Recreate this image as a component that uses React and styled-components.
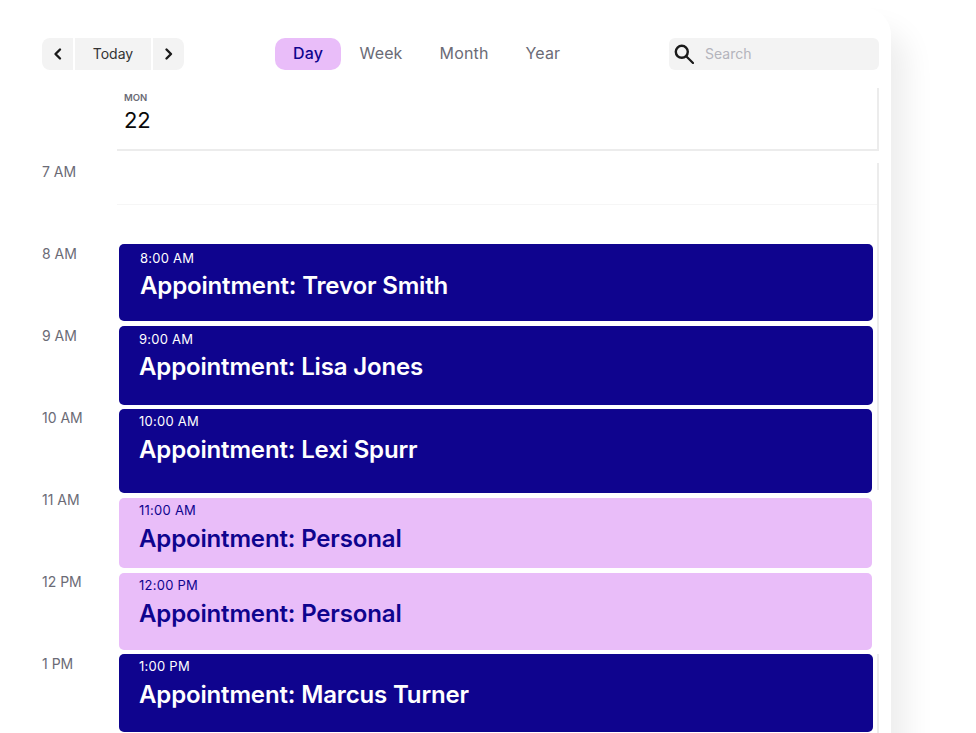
import React from "react";
import styled, { createGlobalStyle } from "styled-components";

const Global = createGlobalStyle`
  html, body { margin: 0; padding: 0; height: 733px; overflow: hidden; background: #fff; }
  body { font-family: Inter, "Liberation Sans", sans-serif; -webkit-font-smoothing: antialiased; }
`;
const Card = styled.div`
  width: 921px; height: 770px; margin: 7px 0 0 -30px; box-sizing: border-box;
  padding: 31px 12px 0 72px; background: #fff; border-radius: 0 28px 0 0;
  box-shadow: 15px 24px 30px rgba(0,0,0,.075);
`;
const Toolbar = styled.div`display: flex; align-items: center; height: 32px;`;
const Nav = styled.div`display: flex; gap: 2px; width: 142px;`;
const NavButton = styled.button`
  border: 0; padding: 0 0 ${p => p.$wide ? 2 : 0}px; width: ${p => p.$wide ? 76 : 31}px; height: 32px; background: #f3f3f3;
  display: flex; align-items: center; justify-content: center; color: #333;
  font: 400 14px Inter, sans-serif;
  border-radius: ${p => p.$side === "l" ? "8px 0 0 8px" : p.$side === "r" ? "0 8px 8px 0" : "0"};
`;
const Tabs = styled.div`display: flex; margin-left: 91px; width: 394px;`;
const Tab = styled.div`
  height: 32px; box-sizing: border-box; display: flex; align-items: center;
  padding: 0 ${p => p.$active ? 18 : 18.5}px 2px; border-radius: 10px; min-width: ${p => p.$active ? 66 : 0}px;
  font-size: 16px; letter-spacing: .15px; font-weight: ${p => p.$active ? 500 : 400};
  color: ${p => p.$active ? "#0f048e" : "#6b6b76"};
  background: ${p => p.$active ? "#e9bdf9" : "transparent"};
`;
const Search = styled.div`
  width: 210px; height: 32px; background: #f3f3f3; border-radius: 6px; display: flex; align-items: center;
  padding: 0 0 0 5px; box-sizing: border-box; gap: 11px; color: #b4b4bc; font-size: 14px;
`;
const SearchLabel = styled.span`padding-bottom: 2px;`;
const Main = styled.div`display: flex; margin-top: 18px;`;
const Times = styled.div`width: 75px; padding-top: 75px; flex: none;`;
const TimeLabel = styled.div`height: 82px; font-size: 14px; line-height: 18px; color: #6b6b76;`;
const Day = styled.div`width: 762px; flex: none;`;
const DayHeader = styled.div`
  height: 63px; box-sizing: border-box; border-right: 2px solid #ececec; border-bottom: 2px solid #ececec;
  padding: 4px 0 0 7px;
`;
const Weekday = styled.div`font-size: 9.5px; font-weight: 600; line-height: 12px; color: #6b6b76;`;
const DayNum = styled.div`font-size: 22px; line-height: 28px; color: #0a0a0a; margin-top: 2px; letter-spacing: -.2px;`;
const Section = styled.div`
  box-sizing: border-box; height: ${p => p.$h}px; margin-top: ${p => p.$mt || 0}px;
  border-right: 2px solid ${p => p.$ruled ? "#ececec" : "transparent"};
  padding-top: ${p => p.$pt || 0}px;
`;
const Slot = styled.div`height: 42px; border-bottom: 1px solid #f6f6f6; box-sizing: border-box;`;
const Event = styled.div`
  box-sizing: border-box; height: ${p => p.$h}px; margin: ${p => p.$mt}px ${p => p.$mr}px 0 2px;
  border-radius: 5px; padding: ${p => p.$pt}px 0 0 ${p => p.$pl}px;
  background: ${p => p.$personal ? "#e9bdf9" : "#0f048e"};
  color: ${p => p.$personal ? "#0f048e" : "#fff"};
`;
const EventTime = styled.div`font-size: 13px; line-height: 16px; letter-spacing: .25px;`;
const EventTitle = styled.div`font-size: 24px; font-weight: 600; letter-spacing: -.15px; line-height: 30px; margin-top: ${p => p.$gap}px;`;

const Chevron = ({ d }) => (
  <svg width="16" height="16" viewBox="0 0 16 16" fill="none" stroke="#1a1a1a" strokeWidth="2.4" strokeLinecap="round" strokeLinejoin="round">
    <path d={d} />
  </svg>
);
const SearchIcon = () => (
  <svg width="20" height="20" viewBox="0 0 20 20" fill="none" stroke="#1a1a1a">
    <circle cx="7.8" cy="7.8" r="6" strokeWidth="2.4" />
    <path d="M12.2 12.2 L19 19" strokeWidth="2.2" strokeLinecap="round" />
  </svg>
);

const times = ["7 AM", "8 AM", "9 AM", "10 AM", "11 AM", "12 PM", "1 PM"];
const Ev = ({ h, mt, mr = 4, pt = 4, gap = 6, pl = 20, time, title, personal }) => (
  <Event $h={h} $mt={mt} $mr={mr} $pt={pt} $pl={pl} $personal={personal}>
    <EventTime>{time}</EventTime>
    <EventTitle $gap={gap}>{title}</EventTitle>
  </Event>
);

export default function App() {
  return (
    <>
      <Global />
      <Card>
        <Toolbar>
          <Nav>
            <NavButton $side="l" aria-label="Previous"><Chevron d="M10 3.5 L5.5 8 L10 12.5" /></NavButton>
            <NavButton $wide>Today</NavButton>
            <NavButton $side="r" aria-label="Next"><Chevron d="M5.5 3.5 L10 8 L5.5 12.5" /></NavButton>
          </Nav>
          <Tabs>
            <Tab $active>Day</Tab>
            <Tab>Week</Tab>
            <Tab>Month</Tab>
            <Tab>Year</Tab>
          </Tabs>
          <Search><SearchIcon /><SearchLabel>Search</SearchLabel></Search>
        </Toolbar>
        <Main>
          <Times>{times.map(t => <TimeLabel key={t}>{t}</TimeLabel>)}</Times>
          <Day>
            <DayHeader>
              <Weekday>MON</Weekday>
              <DayNum>22</DayNum>
            </DayHeader>
            <Section $ruled $mt={12} $h={327}>
              <Slot />
              <Ev h={77} mt={39} pt={6} gap={5} pl={21} time="8:00 AM" title="Appointment: Trevor Smith" />
              <Ev h={79} mt={5} pt={5} gap={5} time="9:00 AM" title="Appointment: Lisa Jones" />
              <Ev h={84} mt={4} mr={5} time="10:00 AM" title="Appointment: Lexi Spurr" />
            </Section>
            <Section $h={164} $pt={8}>
              <Ev personal h={70} mt={0} mr={5} time="11:00 AM" title="Appointment: Personal" />
              <Ev personal h={77} mt={5} mr={5} time="12:00 PM" title="Appointment: Personal" />
            </Section>
            <Section $ruled $h={100}>
              <Ev h={78} mt={0} time="1:00 PM" title="Appointment: Marcus Turner" />
            </Section>
          </Day>
        </Main>
      </Card>
    </>
  );
}
